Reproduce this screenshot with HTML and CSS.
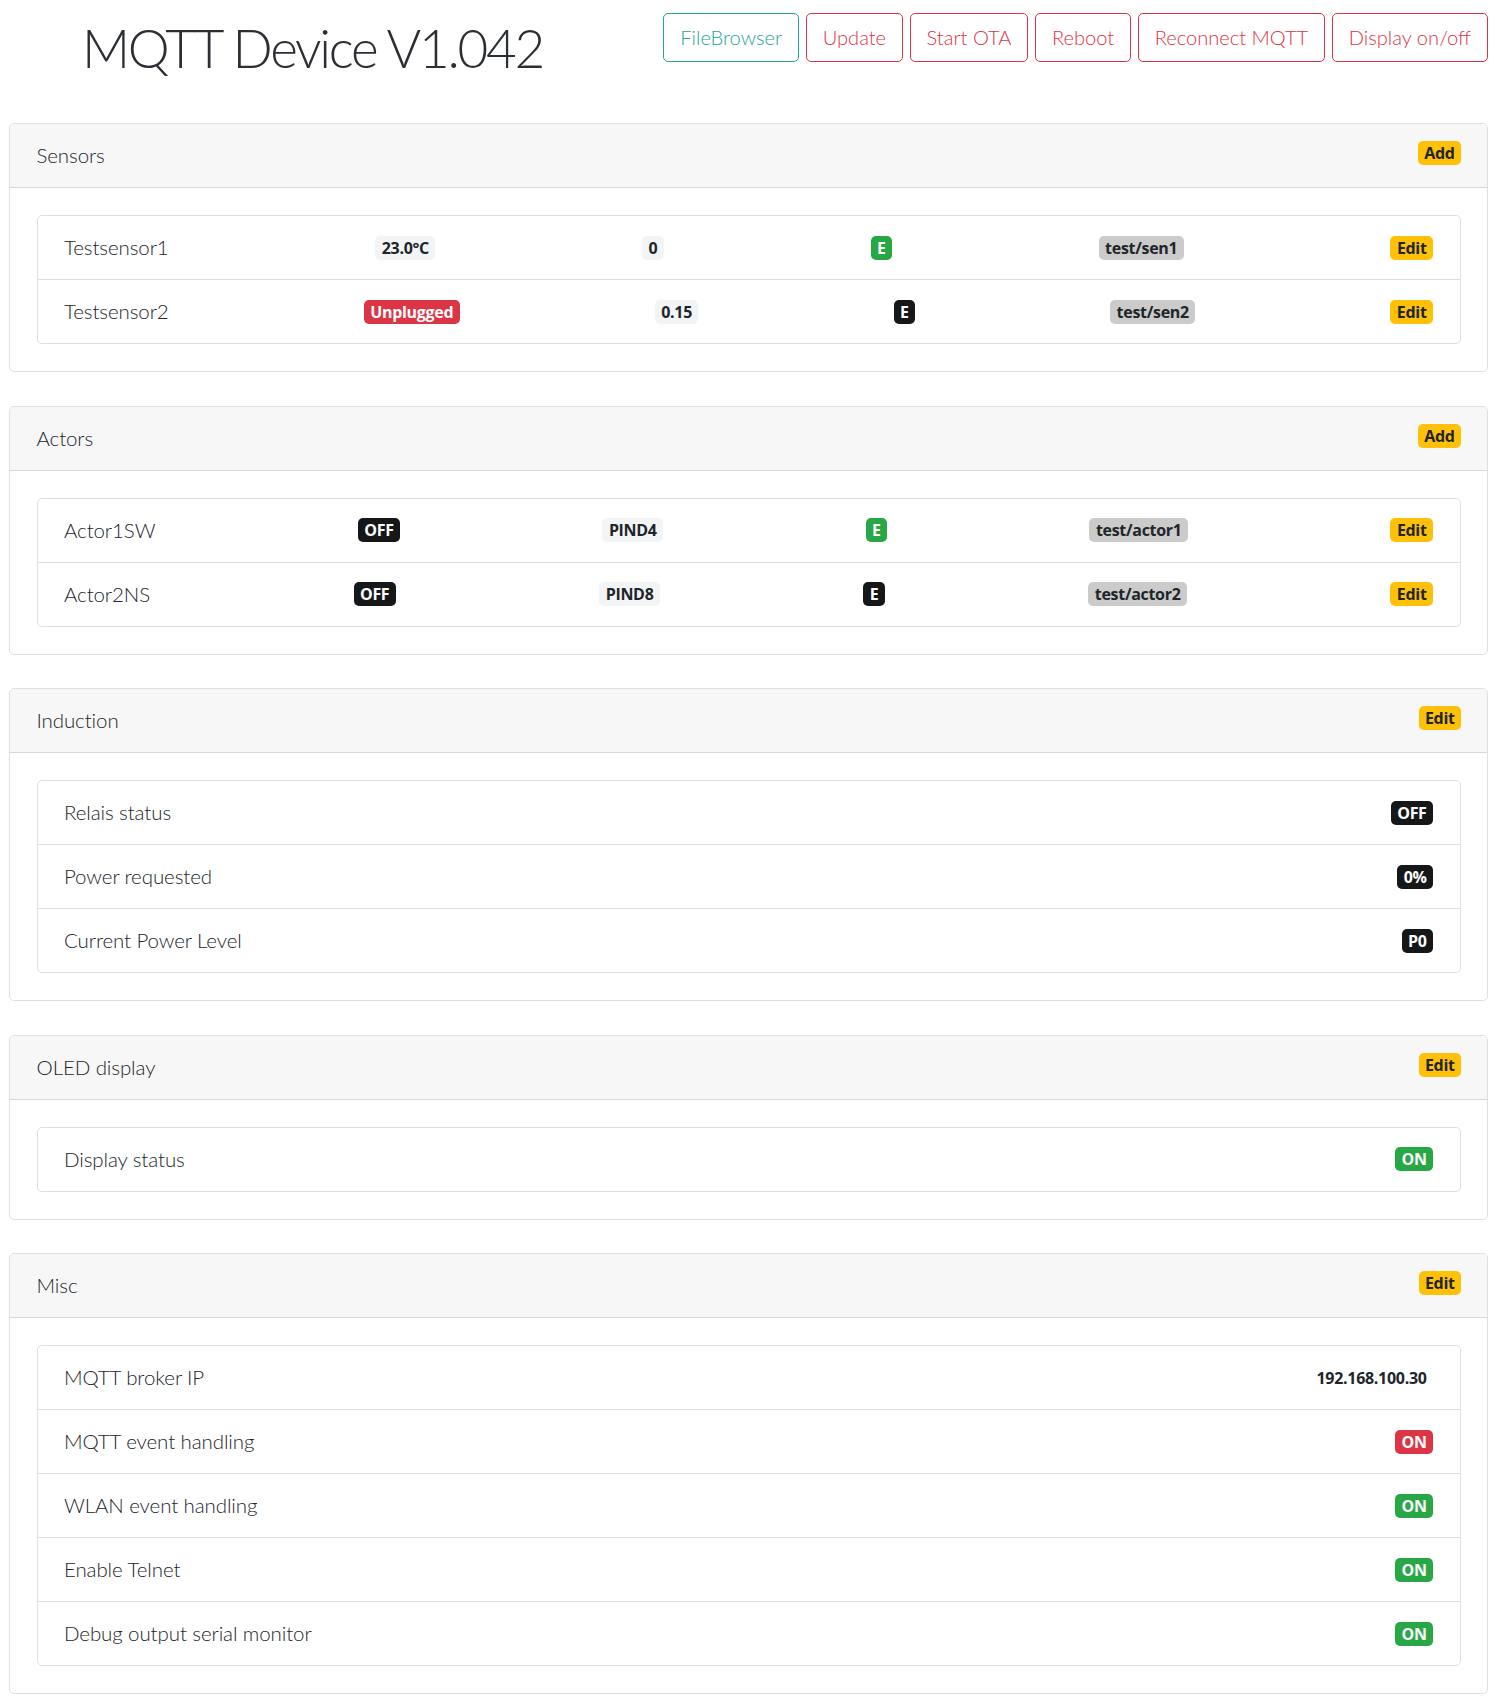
FILE: index.html
```html
<!DOCTYPE html>
<html lang="en">
<head>
<meta charset="utf-8">
<title>MQTT Device V1.042</title>
<link rel="stylesheet" href="styles.css">
</head>
<body>
<div class="page">
  <header class="topbar">
    <h1 class="title">MQTT Device V1.042</h1>
    <nav class="actions">
      <button class="btn btn-info">FileBrowser</button>
      <button class="btn btn-danger">Update</button>
      <button class="btn btn-danger">Start OTA</button>
      <button class="btn btn-danger">Reboot</button>
      <button class="btn btn-danger">Reconnect MQTT</button>
      <button class="btn btn-danger">Display on/off</button>
    </nav>
  </header>

  <section class="card">
    <div class="card-header"><span>Sensors</span><span class="badge b-warning">Add</span></div>
    <div class="card-body">
      <ul class="list">
        <li class="item"><span class="label">Testsensor1</span><span class="badge b-light">23.0°C</span><span class="badge b-light">0</span><span class="badge b-success">E</span><span class="badge b-grey">test/sen1</span><span class="badge b-warning">Edit</span></li>
        <li class="item"><span class="label">Testsensor2</span><span class="badge b-danger">Unplugged</span><span class="badge b-light">0.15</span><span class="badge b-dark">E</span><span class="badge b-grey">test/sen2</span><span class="badge b-warning">Edit</span></li>
      </ul>
    </div>
  </section>

  <section class="card">
    <div class="card-header"><span>Actors</span><span class="badge b-warning">Add</span></div>
    <div class="card-body">
      <ul class="list">
        <li class="item"><span class="label">Actor1SW</span><span class="badge b-dark">OFF</span><span class="badge b-light">PIND4</span><span class="badge b-success">E</span><span class="badge b-grey">test/actor1</span><span class="badge b-warning">Edit</span></li>
        <li class="item"><span class="label">Actor2NS</span><span class="badge b-dark">OFF</span><span class="badge b-light">PIND8</span><span class="badge b-dark">E</span><span class="badge b-grey">test/actor2</span><span class="badge b-warning">Edit</span></li>
      </ul>
    </div>
  </section>

  <section class="card">
    <div class="card-header"><span>Induction</span><span class="badge b-warning">Edit</span></div>
    <div class="card-body">
      <ul class="list">
        <li class="item"><span class="label">Relais status</span><span class="badge b-dark">OFF</span></li>
        <li class="item"><span class="label">Power requested</span><span class="badge b-dark">0%</span></li>
        <li class="item"><span class="label">Current Power Level</span><span class="badge b-dark">P0</span></li>
      </ul>
    </div>
  </section>

  <section class="card">
    <div class="card-header"><span>OLED display</span><span class="badge b-warning">Edit</span></div>
    <div class="card-body">
      <ul class="list">
        <li class="item"><span class="label">Display status</span><span class="badge b-success">ON</span></li>
      </ul>
    </div>
  </section>

  <section class="card">
    <div class="card-header"><span>Misc</span><span class="badge b-warning">Edit</span></div>
    <div class="card-body">
      <ul class="list">
        <li class="item"><span class="label">MQTT broker IP</span><span class="badge b-plain">192.168.100.30</span></li>
        <li class="item"><span class="label">MQTT event handling</span><span class="badge b-danger">ON</span></li>
        <li class="item"><span class="label">WLAN event handling</span><span class="badge b-success">ON</span></li>
        <li class="item"><span class="label">Enable Telnet</span><span class="badge b-success">ON</span></li>
        <li class="item"><span class="label">Debug output serial monitor</span><span class="badge b-success">ON</span></li>
      </ul>
    </div>
  </section>
</div>
</body>
</html>
```

FILE: styles.css
```css
* { box-sizing: border-box; }

html, body {
  margin: 0;
  padding: 0;
  background: #fff;
}

body {
  font-family: "Lato", "Open Sans", sans-serif;
  font-weight: 300;
  font-size: 20.5px;
  letter-spacing: -0.1px;
  color: #212529;
}

.page {
  display: flex;
  flex-direction: column;
  gap: 33.6px;
  padding: 0 14px 0 9px;
}

.topbar {
  display: flex;
  justify-content: space-between;
  align-items: flex-start;
  height: 123px;
  padding-top: 13px;
  margin-bottom: -33.6px;
}

.title {
  margin: 3px 0 0 73px;
  font-size: 53px;
  font-weight: 300;
  line-height: 1.2;
  letter-spacing: -2.3px;
  color: #2b2f33;
}

.actions {
  display: flex;
  gap: 6.5px;
}

.btn {
  font-family: inherit;
  font-weight: 300;
  font-size: 20.1px;
  letter-spacing: 0;
  line-height: 31px;
  padding: 8px 16px;
  background: #fff;
  border: 1px solid;
  border-radius: 5px;
  cursor: pointer;
}

.btn-info {
  color: #1fa595;
  border-color: #22a595;
}

.btn-danger {
  color: #dc3545;
  border-color: #dc3545;
}

.card {
  border: 1px solid rgba(0, 0, 0, 0.125);
  border-radius: 5px;
  overflow: hidden;
}

.card-header {
  display: flex;
  justify-content: space-between;
  align-items: flex-start;
  padding: 16px 26px 16px 26.5px;
  line-height: 31px;
  background: #f7f7f7;
  border-bottom: 1px solid rgba(0, 0, 0, 0.125);
}

.card-body {
  padding: 27px 26.5px;
}

.list {
  list-style: none;
  margin: 0;
  padding: 0;
  border: 1px solid rgba(0, 0, 0, 0.125);
  border-radius: 5px;
}

.item {
  display: flex;
  justify-content: space-between;
  align-items: center;
  padding: 16px 26.5px;
  line-height: 31px;
}

.item + .item {
  border-top: 1px solid rgba(0, 0, 0, 0.125);
}

.badge {
  display: inline-block;
  font-family: "Open Sans", "Lato", sans-serif;
  font-weight: 700;
  font-size: 16px;
  letter-spacing: -0.3px;
  line-height: 16px;
  padding: 4px 6.4px;
  border-radius: 5px;
  white-space: nowrap;
}

.card-header .badge {
  margin-top: 1px;
}

.b-warning { background: #ffc107; color: #212529; }
.b-success { background: #28a745; color: #fff; }
.b-danger  { background: #dc3545; color: #fff; }
.b-dark    { background: #151719; color: #fff; }
.b-light   { background: #f3f4f5; color: #212529; }
.b-grey    { background: #cbcbcb; color: #212529; }
.b-plain   { background: transparent; color: #212529; }
```
